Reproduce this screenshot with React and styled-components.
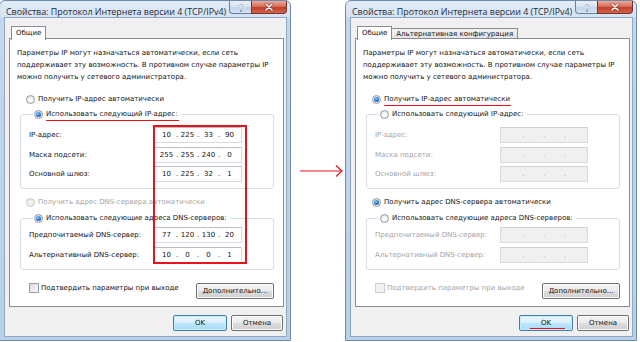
import React from 'react';
import styled, { createGlobalStyle, css } from 'styled-components';

const Global = createGlobalStyle`
  html, body { margin: 0; padding: 0; background: #fff; }
  body { width: 640px; height: 342px; overflow: hidden; }
`;

const BODY_FONT = `"DejaVu Sans", "Liberation Sans", sans-serif`;
const TITLE_FONT = `"Open Sans", "Noto Sans", sans-serif`;

const Page = styled.div`
  width: 640px;
  height: 342px;
  display: flex;
  align-items: flex-start;
  overflow: hidden;
  background: #fff;
`;

const Win = styled.div`
  position: relative;
  flex: none;
  width: 292px;
  height: 341px;
  margin-left: ${p => p.$offset}px;
  box-sizing: border-box;
  border: 1px solid #7189a8;
  border-radius: 6px 6px 0 0;
  background: linear-gradient(180deg, #e3ecf7 0px, #d4e2f2 16px, #c3d7ee 17px, #b9d0eb 100%);
  display: flex;
  flex-direction: column;
  padding: 0 3px 3px 4px;
  font-family: ${BODY_FONT};
  font-size: 7px;
  color: #111;
`;

const TitleBar = styled.div`
  height: 16px;
  display: flex;
  align-items: flex-start;
`;

const Title = styled.div`
  flex: 1;
  font-family: ${TITLE_FONT};
  font-size: 8.9px;
  line-height: 12px;
  padding: 5px 0 0 2px;
  color: #1e2a38;
  white-space: nowrap;
`;

const CapBtn = styled.div`
  height: 13px;
  box-sizing: border-box;
  display: flex;
  align-items: center;
  justify-content: center;
  border: 1px solid #6e7f96;
  border-top: none;
  ${p => p.$close ? css`
    width: 36px;
    border-color: #7a3329;
    border-radius: 0 0 4px 0;
    background: linear-gradient(180deg, #e9a99c 0%, #d7705c 45%, #c2402a 55%, #d4624c 100%);
  ` : css`
    width: 22px;
    border-right: none;
    border-radius: 0 0 0 4px;
    background: linear-gradient(180deg, #e9f0f8 0%, #d6e2f0 45%, #c4d5ea 55%, #d3e2f3 100%);
  `}
`;

const Client = styled.div`
  flex: 1;
  background: #f0f0f0;
  border: 1px solid #90a6c3;
  padding: 8px 2px 0 4px;
  display: flex;
  flex-direction: column;
`;

const Tabs = styled.div`
  display: flex;
  align-items: flex-end;
  height: 13px;
  padding-left: 2px;
  position: relative;
  z-index: 1;
  margin-bottom: -1px;
`;

const Tab = styled.div`
  box-sizing: border-box;
  font-size: 7px;
  white-space: nowrap;
  border: 1px solid #898c95;
  border-bottom: none;
  padding: 0 4px;
  display: flex;
  align-items: center;
  ${p => p.$active ? css`
    height: 14px;
    background: #fff;
    padding-bottom: 1px;
    margin-bottom: -1px;
  ` : css`
    height: 11px;
    margin-left: -1px;
    background: linear-gradient(180deg, #f3f3f3, #e3e3e3);
    border-bottom: 1px solid #898c95;
  `}
`;

const Panel = styled.div`
  background: #fff;
  border: 1px solid #898c95;
  height: 269px;
  box-sizing: border-box;
  padding: 8px 9px 0 7px;
  display: flex;
  flex-direction: column;
`;

const Desc = styled.div`
  line-height: 12px;
  white-space: nowrap;
`;

const Option = styled.label`
  display: flex;
  align-items: center;
  height: 14px;
  gap: 3px;
  white-space: nowrap;
  margin-top: ${p => p.$mt || 0}px;
  margin-left: ${p => p.$ml || 0}px;
  color: ${p => p.$disabled ? '#a4a4a4' : '#111'};
`;

const Underlined = styled.span`
  position: relative;
  &::after {
    content: '';
    position: absolute;
    left: 0;
    right: -1px;
    bottom: -3px;
    height: 1px;
    background: #e8121a;
  }
`;

const Radio = styled.span`
  flex: none;
  width: 9px;
  height: 9px;
  box-sizing: border-box;
  border-radius: 50%;
  border: 1px solid ${p => p.$disabled ? '#c8c8c8' : '#8e9aa8'};
  background: ${p => p.$disabled
    ? 'radial-gradient(circle at 50% 60%, #f4f4f4, #e4e4e4)'
    : 'radial-gradient(circle at 50% 65%, #ffffff 20%, #d2d6dc 100%)'};
  display: flex;
  align-items: center;
  justify-content: center;
  &::after {
    content: '';
    display: ${p => p.$checked ? 'block' : 'none'};
    width: 5px;
    height: 5px;
    border-radius: 50%;
    background: radial-gradient(circle at 40% 35%, #8fd1ff 0%, #2a7ed4 45%, #0b3f8a 100%);
  }
`;

const Group = styled.fieldset`
  margin: ${p => p.$mt}px 0 0 3px;
  padding: ${p => p.$pt}px 31px ${p => p.$pb}px 8px;
  border: 1px solid #d5dfe5;
  border-radius: 3px;
  min-width: 0;
  display: flex;
  flex-direction: column;
  gap: 3.5px;
`;

const Legend = styled.legend`
  padding: 0 3px 0 1px;
  margin-left: 4px;
`;

const FieldRow = styled.div`
  display: flex;
  align-items: center;
  justify-content: space-between;
  height: 16px;
  white-space: nowrap;
  color: ${p => p.$disabled ? '#a4a4a4' : '#111'};
`;

const IpBox = styled.div`
  flex: none;
  width: 88px;
  height: 16px;
  box-sizing: border-box;
  border: 1px solid ${p => p.$disabled ? '#dadada' : '#d6dbe2'};
  border-top-color: ${p => p.$disabled ? '#d0d0d0' : '#b9bec6'};
  background: ${p => p.$disabled ? '#f0f0f0' : '#fff'};
  display: flex;
  align-items: center;
  padding: 0 3px;
  color: ${p => p.$disabled ? '#9a9a9a' : '#111'};
`;

const Seg = styled.span`
  width: 17px;
  text-align: center;
`;

const Dot = styled.span`
  width: 4px;
  text-align: center;
`;

const BottomRow = styled.div`
  display: flex;
  align-items: flex-start;
  justify-content: space-between;
  margin: 13px 0 0 12px;
`;

const Check = styled.label`
  display: flex;
  align-items: center;
  gap: 2px;
  height: 10px;
  white-space: nowrap;
  color: ${p => p.$disabled ? '#a4a4a4' : '#111'};
`;

const Box = styled.span`
  width: 10px;
  height: 10px;
  box-sizing: border-box;
  border: 1px solid ${p => p.$disabled ? '#cfcfcf' : '#9a9ea5'};
  background: ${p => p.$disabled ? '#f2f2f2' : 'linear-gradient(135deg, #dcdcdc, #f7f7f7)'};
`;

const Button = styled.div`
  flex: none;
  width: ${p => p.$w}px;
  height: 16px;
  box-sizing: border-box;
  border-radius: 2px;
  display: flex;
  align-items: center;
  justify-content: center;
  position: relative;
  white-space: nowrap;
  ${p => p.$default ? css`
    border: 1px solid #3c7fb1;
    background: linear-gradient(180deg, #eaf6fd 0%, #d9f0fc 50%, #bee6fd 52%, #a7d9f5 100%);
    box-shadow: inset 0 0 0 1px #c9ecfd;
  ` : css`
    border: 1px solid #707070;
    background: linear-gradient(180deg, #f2f2f2 0%, #ebebeb 50%, #dddddd 52%, #cfcfcf 100%);
    box-shadow: inset 0 0 0 1px #fbfbfb;
  `}
`;

const BtnUnderline = styled.span`
  position: absolute;
  left: 10px;
  right: 7px;
  bottom: 1px;
  height: 1px;
  background: #e8121a;
`;

const Buttons = styled.div`
  display: flex;
  justify-content: flex-end;
  gap: 4px;
  margin-top: 8px;
  padding-right: 1px;
`;

const RedFrame = styled.div`
  position: absolute;
  left: 153px;
  top: 124px;
  width: 94px;
  height: 139px;
  box-sizing: border-box;
  border: 2px solid #e8121a;
  pointer-events: none;
`;

const ArrowZone = styled.div`
  flex: none;
  width: 54px;
  height: 342px;
  display: flex;
  align-items: center;
  padding-left: 9px;
  box-sizing: border-box;
`;

const ip = (parts) => (
  <>
    <Seg>{parts[0]}</Seg><Dot>.</Dot>
    <Seg>{parts[1]}</Seg><Dot>.</Dot>
    <Seg>{parts[2]}</Seg><Dot>.</Dot>
    <Seg>{parts[3]}</Seg>
  </>
);

function Caption() {
  return (
    <TitleBar>
      <Title>Свойства: Протокол Интернета версии 4 (TCP/IPv4)</Title>
      <CapBtn>
        <svg width="8" height="9" viewBox="0 0 8 9">
          <path d="M2 3 C2 1 6 1 6 3 C6 4.5 4 4.5 4 6" fill="none" stroke="#fff" strokeWidth="1.6" />
          <path d="M2 3 C2 1 6 1 6 3 C6 4.5 4 4.5 4 6" fill="none" stroke="#6b7c93" strokeWidth="0.7" />
          <rect x="3.2" y="7" width="1.6" height="1.6" fill="#6b7c93" />
        </svg>
      </CapBtn>
      <CapBtn $close>
        <svg width="10" height="8" viewBox="0 0 10 8">
          <path d="M2 1 L8 7 M8 1 L2 7" stroke="#7a2a20" strokeWidth="2.6" strokeLinecap="round" />
          <path d="M2 1 L8 7 M8 1 L2 7" stroke="#fff" strokeWidth="1.6" strokeLinecap="round" />
        </svg>
      </CapBtn>
    </TitleBar>
  );
}

const EMPTY = ['', '', '', ''];

function Dialog({ variant }) {
  const manual = variant === 'manual';
  return (
    <>
      <Caption />
      <Client>
        <Tabs>
          <Tab $active>Общие</Tab>
          {!manual && <Tab>Альтернативная конфигурация</Tab>}
        </Tabs>
        <Panel>
          <Desc>
            Параметры IP могут назначаться автоматически, если сеть<br />
            поддерживает эту возможность. В противном случае параметры IP<br />
            можно получить у сетевого администратора.
          </Desc>
          <Option $mt={9} $ml={9}>
            <Radio $checked={!manual} />
            {manual ? 'Получить IP-адрес автоматически' : <Underlined>Получить IP-адрес автоматически</Underlined>}
          </Option>
          <Group $mt={1} $pt={6} $pb={6}>
            <Legend>
              <Option>
                <Radio $checked={manual} />
                {manual ? <Underlined>Использовать следующий IP-адрес:</Underlined> : 'Использовать следующий IP-адрес:'}
              </Option>
            </Legend>
            <FieldRow $disabled={!manual}>
              IP-адрес:
              <IpBox $disabled={!manual}>{ip(manual ? ['10', '225', '33', '90'] : EMPTY)}</IpBox>
            </FieldRow>
            <FieldRow $disabled={!manual}>
              Маска подсети:
              <IpBox $disabled={!manual}>{ip(manual ? ['255', '255', '240', '0'] : EMPTY)}</IpBox>
            </FieldRow>
            <FieldRow $disabled={!manual}>
              Основной шлюз:
              <IpBox $disabled={!manual}>{ip(manual ? ['10', '225', '32', '1'] : EMPTY)}</IpBox>
            </FieldRow>
          </Group>
          <Option $mt={6} $ml={9} $disabled={manual}>
            <Radio $checked={!manual} $disabled={manual} />
            Получить адрес DNS-сервера автоматически
          </Option>
          <Group $mt={2} $pt={2} $pb={6}>
            <Legend>
              <Option>
                <Radio $checked={manual} />
                Использовать следующие адреса DNS-серверов:
              </Option>
            </Legend>
            <FieldRow $disabled={!manual}>
              Предпочитаемый DNS-сервер:
              <IpBox $disabled={!manual}>{ip(manual ? ['77', '120', '130', '20'] : EMPTY)}</IpBox>
            </FieldRow>
            <FieldRow $disabled={!manual}>
              Альтернативный DNS-сервер:
              <IpBox $disabled={!manual}>{ip(manual ? ['10', '0', '0', '1'] : EMPTY)}</IpBox>
            </FieldRow>
          </Group>
          <BottomRow>
            <Check $disabled={!manual}>
              <Box $disabled={!manual} />
              Подтвердить параметры при выходе
            </Check>
            <Button $w={78}>Дополнительно...</Button>
          </BottomRow>
        </Panel>
        <Buttons>
          <Button $w={54} $default>
            OK
            {!manual && <BtnUnderline />}
          </Button>
          <Button $w={52}>Отмена</Button>
        </Buttons>
      </Client>
      {manual && <RedFrame />}
    </>
  );
}

export default function App() {
  return (
    <Page>
      <Global />
      <Win $offset={-1}>
        <Dialog variant="manual" />
      </Win>
      <ArrowZone>
        <svg width="43" height="14" viewBox="0 0 43 14">
          <path d="M0 7 H42" stroke="#e8121a" strokeWidth="1.2" />
          <path d="M36 1.5 L42 7 L36 12.5" fill="none" stroke="#e8121a" strokeWidth="1.2" />
        </svg>
      </ArrowZone>
      <Win $offset={0}>
        <Dialog variant="auto" />
      </Win>
    </Page>
  );
}
